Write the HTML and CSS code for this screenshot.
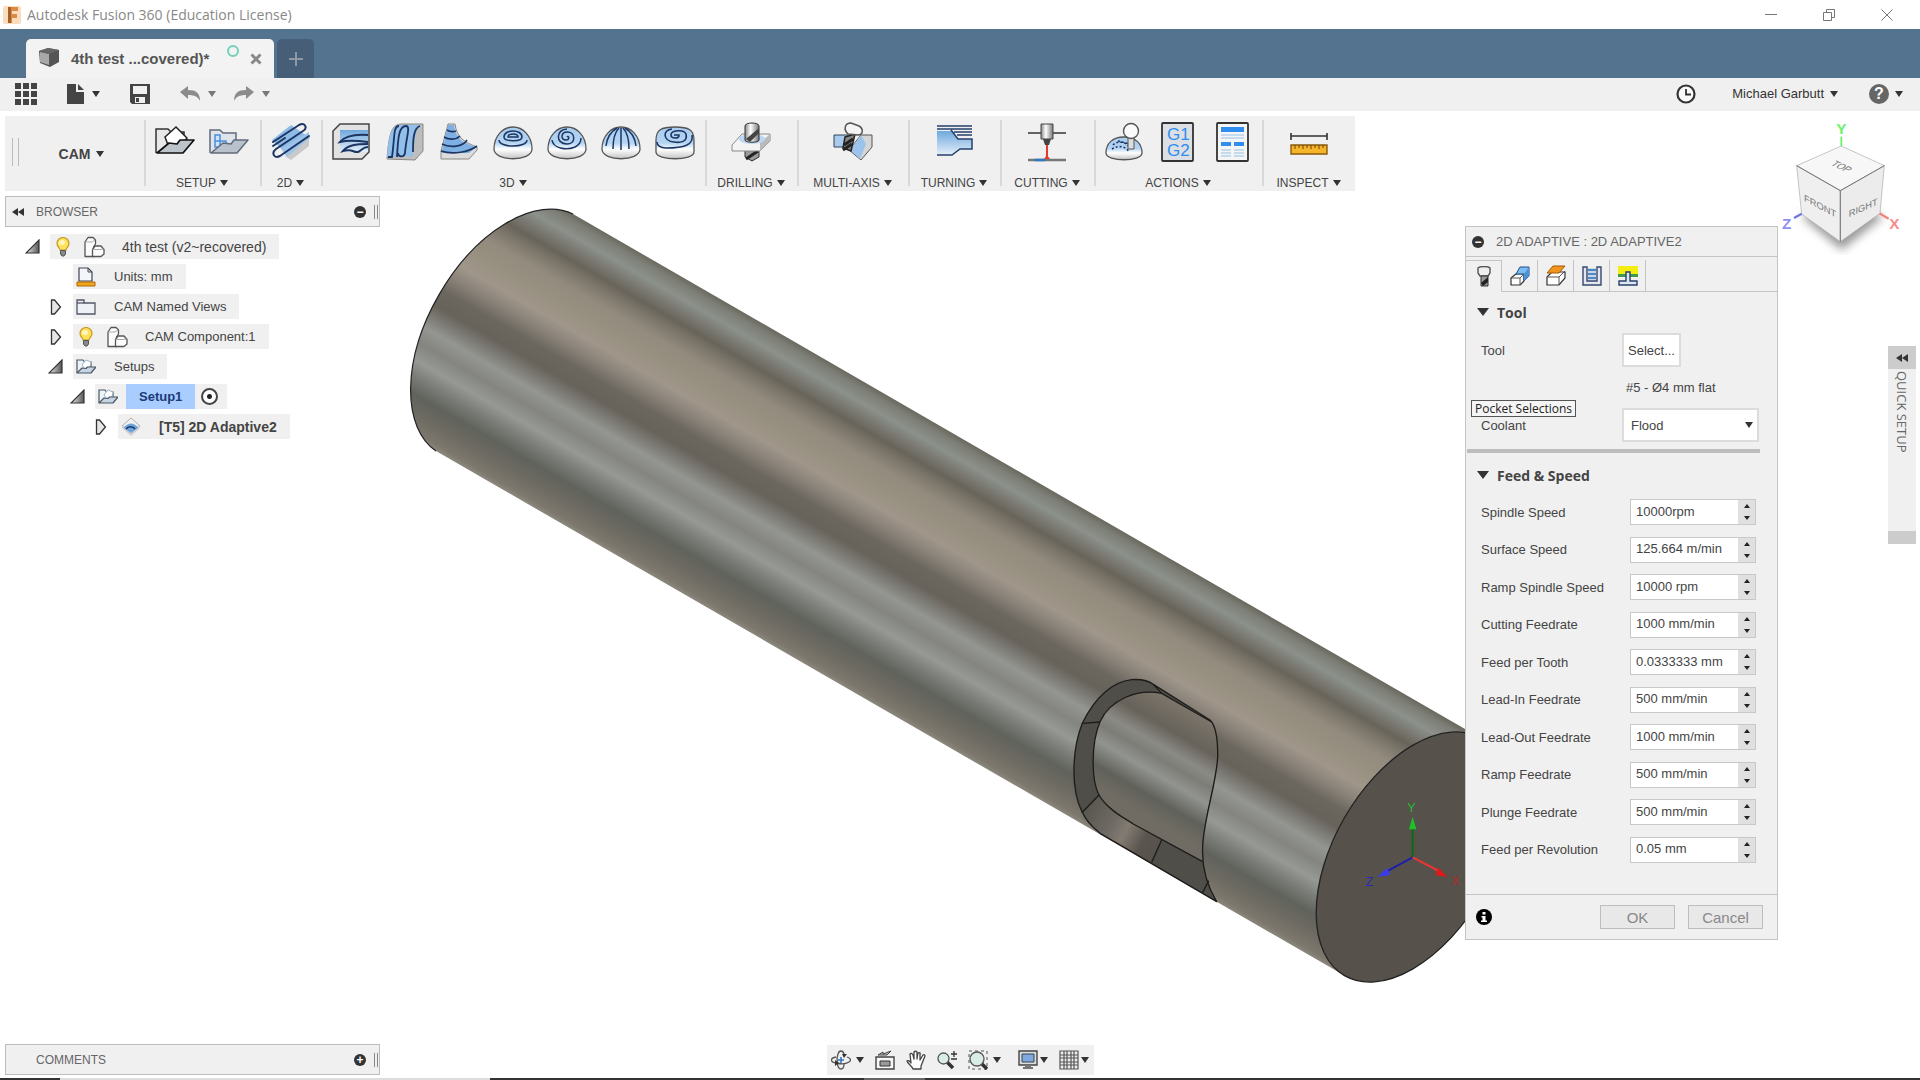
FILE: index.html
```html
<!DOCTYPE html>
<html lang="en">
<head>
  <meta charset="UTF-8" />
  <meta name="viewport" content="width=device-width, initial-scale=1.0"/>
  <title>Autodesk Fusion 360 (Education License)</title>
  <link rel="stylesheet" href="styles.css">
</head>
<body>
  <!-- shared icons -->
  <svg class="defs" aria-hidden="true">
    <linearGradient id="blue" x1="0" y1="0" x2="0" y2="1">
      <stop offset="0" stop-color="#6fa8dc"/><stop offset="1" stop-color="#e4effa"/>
    </linearGradient>
    <linearGradient id="dome" x1="0" y1="0" x2="0" y2="1">
      <stop offset="0" stop-color="#a9cdf0"/><stop offset=".5" stop-color="#b4d4f2"/><stop offset=".7" stop-color="#fff"/><stop offset="1" stop-color="#c4c4c4"/>
    </linearGradient>
    <linearGradient id="steel" x1="0" y1="0" x2="1" y2="0">
      <stop offset="0" stop-color="#888"/><stop offset=".4" stop-color="#fff"/><stop offset="1" stop-color="#777"/>
    </linearGradient>
    <linearGradient id="tri" x1="0" y1="0" x2="1" y2="0">
      <stop offset="0" stop-color="#eee"/><stop offset="1" stop-color="#555"/>
    </linearGradient>
    <symbol id="open" viewBox="0 0 16 16"><path d="M14 1v13H1z" fill="url(#tri)" stroke="#333" stroke-width="1.2"/></symbol>
    <symbol id="closed" viewBox="0 0 16 16"><path d="M3.500 1v14h3l6-7-6-7z" fill="#e6e6e6" stroke="#333" stroke-width="1.300"/></symbol>
    <symbol id="bulb" viewBox="0 0 20 20">
      <path d="M7 13c0-2-3-3-3-6.500a6 6 0 0 1 12 0C16 10 13 11 13 13z" fill="#ffe15a" stroke="#c79a2c" stroke-width="1.200"/>
      <ellipse cx="9" cy="5.500" rx="3" ry="2.500" fill="#fff6c0"/>
      <path d="M7.500 13.500h5V17l-1.500 2H9l-1.500-2z" fill="#888" stroke="#555"/>
    </symbol>
    <symbol id="component" viewBox="0 0 22 22">
      <path d="M2 20.500V6l3-4.500h5L12.500 4v4l-2 3v9.500z" fill="#fcfcfc" stroke="#555" stroke-width="1.300" stroke-linejoin="round"/>
      <path d="M9.500 20.500v-7L12 10h6l3 3.500V18l-3 2.500z" fill="#fcfcfc" stroke="#555" stroke-width="1.300" stroke-linejoin="round"/>
      <path d="M2.500 6H9l3-2M9.500 13.500h7.500l3.500-.500" fill="none" stroke="#aaa"/>
    </symbol>
    <symbol id="setup" viewBox="0 0 20 20">
      <path d="M1 16V3h6l1.500 2H15v5" fill="#eef3f8" stroke="#4a5663" stroke-width="1.200"/>
      <path d="M6 8l4-5 5 2-1 5-5 2z" fill="#fff" stroke="#9bb3cc"/>
      <path d="M1 16l5-5 4 .500 1.500-1.500H20l-5 6z" fill="#c5d3e2" stroke="#4a5663" stroke-width="1.200" stroke-linejoin="round"/>
    </symbol>
  </svg>

  <header class="titlebar">
    <svg class="app-logo" viewBox="0 0 18 18"><rect width="18" height="18" rx="2" fill="#fbdcbd"/><path d="M5 1h10v4H9v3h5v4H9v5H5z" fill="#d98a45"/><path d="M5 1h3v16H5z" fill="#a5602a"/></svg>
    <span class="app-title">Autodesk Fusion 360 (Education License)</span>
    <div class="window-buttons">
      <button aria-label="Minimize"><svg viewBox="0 0 14 14"><path d="M1 6.500h12"/></svg></button>
      <button aria-label="Restore"><svg viewBox="0 0 14 14"><path d="M1.500 4.500h8v8h-8zM4.500 4.500v-3h8v8h-3"/></svg></button>
      <button aria-label="Close"><svg viewBox="0 0 14 14"><path d="M1.500 1.500l11 11M12.500 1.500l-11 11"/></svg></button>
    </div>
  </header>

  <nav class="tabstrip">
    <div class="doc-tab">
      <svg class="doc-icon" viewBox="0 0 20 20"><path d="M0 4l9-3 11 2v12l-9 5-10-4z" fill="#555"/><path d="M1 5l9 2v11l-9-3z" fill="#a9a9a9"/><path d="M0 4l9-3 11 2-10 4z" fill="#666"/></svg>
      <span class="doc-name">4th test ...covered)*</span>
      <span class="sync"></span>
      <button class="tab-close" aria-label="Close tab"><svg viewBox="0 0 12 12"><path d="M1.500 1.500l9 9M10.500 1.500l-9 9"/></svg></button>
    </div>
    <button class="new-tab" aria-label="New tab"><svg viewBox="0 0 14 14"><path d="M7 0v14M0 7h14"/></svg></button>
  </nav>

  <div class="quickbar">
    <button class="q-grid" aria-label="Data panel"><svg viewBox="0 0 22 22"><path d="M0 0h6v6H0zM8 0h6v6H8zM16 0h6v6h-6zM0 8h6v6H0zM8 8h6v6H8zM16 8h6v6h-6zM0 16h6v6H0zM8 16h6v6H8zM16 16h6v6h-6z" fill="#444"/></svg></button>
    <button class="q-file" aria-label="File"><svg viewBox="0 0 17 20"><path d="M0 0h9v8h8v12H0z" fill="#444"/><path d="M11 0l6 6h-6z" fill="#444"/></svg><i class="caret"></i></button>
    <button class="q-save" aria-label="Save"><svg viewBox="0 0 20 20"><path d="M0 0h20v20H2l-2-2z" fill="#444"/><path d="M3 2h14v8H3z" fill="#f0f0f0"/><path d="M5 13h10v6H5z" fill="#f0f0f0"/><path d="M6 14h3v4H6z" fill="#444"/></svg></button>
    <button class="q-undo" aria-label="Undo"><svg viewBox="0 0 20 16"><path d="M0 6l8-6v4c8 0 12 3 12 11-2-4-5-6-12-6v4z" fill="#8b8b8b"/></svg><i class="caret dim"></i></button>
    <button class="q-redo" aria-label="Redo"><svg viewBox="0 0 20 16"><path d="M20 6l-8-6v4C4 4 0 7 0 15c2-4 5-6 12-6v4z" fill="#8b8b8b"/></svg><i class="caret dim"></i></button>
    <div class="account">
      <button aria-label="Job status"><svg class="clock" viewBox="0 0 20 20"><circle cx="10" cy="10" r="8.500" fill="#fafafa" stroke="#333" stroke-width="2.200"/><path d="M10 5v5.500h5" fill="none" stroke="#333" stroke-width="1.800"/></svg></button>
      <button class="user">Michael Garbutt <i class="caret"></i></button>
      <button class="help" aria-label="Help"><span>?</span><i class="caret"></i></button>
    </div>
  </div>

  <main class="workspace">
    <svg class="scene" viewBox="0 111 1920 967" role="img" aria-label="Cylinder model">
      <defs>
        <linearGradient id="metal" gradientUnits="userSpaceOnUse" x1="576.500" y1="216" x2="439.500" y2="453">
          <stop offset="0" stop-color="#6b695f"/>
          <stop offset=".025" stop-color="#7d7f77"/>
          <stop offset=".07" stop-color="#8c918b"/>
          <stop offset=".1" stop-color="#7e7f78"/>
          <stop offset=".15" stop-color="#69645a"/>
          <stop offset=".19" stop-color="#7e786c"/>
          <stop offset=".24" stop-color="#938b7e"/>
          <stop offset=".3" stop-color="#979080"/>
          <stop offset=".37" stop-color="#a0968a"/>
          <stop offset=".42" stop-color="#8b847b"/>
          <stop offset=".48" stop-color="#6b665e"/>
          <stop offset=".54" stop-color="#67625a"/>
          <stop offset=".59" stop-color="#7f7e79"/>
          <stop offset=".63" stop-color="#949691"/>
          <stop offset=".69" stop-color="#848580"/>
          <stop offset=".75" stop-color="#969994"/>
          <stop offset=".8" stop-color="#7c7f79"/>
          <stop offset=".86" stop-color="#60625c"/>
          <stop offset=".92" stop-color="#6d6a62"/>
          <stop offset=".98" stop-color="#7d786d"/>
          <stop offset="1" stop-color="#8d887e"/>
        </linearGradient>
        <linearGradient id="floor" gradientUnits="userSpaceOnUse" x1="470" y1="140" x2="280" y2="470">
          <stop offset="0" stop-color="#857f74"/>
          <stop offset=".15" stop-color="#777167"/>
          <stop offset=".32" stop-color="#67625a"/>
          <stop offset=".47" stop-color="#8b8b86"/>
          <stop offset=".56" stop-color="#7d7d78"/>
          <stop offset=".68" stop-color="#92948f"/>
          <stop offset=".85" stop-color="#60615b"/>
          <stop offset="1" stop-color="#706c63"/>
        </linearGradient>
        <linearGradient id="wall" gradientUnits="userSpaceOnUse" x1="200" y1="510" x2="410" y2="630">
          <stop offset="0" stop-color="#5a5751"/>
          <stop offset=".35" stop-color="#6e6a63"/>
          <stop offset=".55" stop-color="#827b72"/>
          <stop offset=".8" stop-color="#5a554e"/>
          <stop offset="1" stop-color="#57534c"/>
        </linearGradient>
      </defs>
      <path d="M573 214L1481.500 738.500L1344.500 975.500L436 451A137 79 -60 0 1 573 214z" fill="url(#metal)"/>
      <path d="M436 451A137 79 -60 0 1 573 214" fill="none" stroke="#222" stroke-width="1.200"/>
      <ellipse cx="1413" cy="857" rx="137" ry="79" transform="rotate(-60 1413 857)" fill="#56514a" stroke="#222" stroke-width="1.300"/>

      <!-- pocket and origin triad, drawn at three times size -->
      <g transform="translate(1020 640) scale(.33333)" stroke-linejoin="round">
        <path d="M570 240L400 133C380 118 350 118 335 119C280 125 225 170 187 250C155 330 152 450 187 517C200 548 225 568 240 580L590 785C560 735 545 680 548 620C550 540 590 430 593 350C594 280 582 252 570 240z" fill="#504e49"/>
        <path d="M425 160C350 145 270 180 240 245C213 310 213 420 237 465C262 510 320 538 340 552L548 665C540 560 588 430 593 350C594 280 582 252 570 240z" fill="url(#floor)"/>
        <path d="M237 465L187 517C200 548 225 568 240 580L395 667L425 600L340 552C320 538 262 510 237 465z" fill="url(#wall)"/>
        <g fill="none" stroke="#1d1c1a" stroke-width="4">
          <path d="M570 240L400 133C380 118 350 118 335 119C280 125 225 170 187 250C155 330 152 450 187 517C200 548 225 568 240 580L590 785C560 735 545 680 548 620C550 540 590 430 593 350C594 280 582 252 570 240z"/>
          <path d="M425 160C350 145 270 180 240 245C213 310 213 420 237 465C262 510 320 538 340 552L548 665"/>
          <path d="M187 250L240 246M187 517L237 465M425 600L395 667M566 722L548 758M400 133L425 160L575 246"/>
        </g>
        <g stroke-width="6">
          <path d="M1178 652V560" stroke="#0b6b14"/><path d="M1178 530l11 38h-22z" fill="#18c428"/>
          <path d="M1178 652L1095 697" stroke="#1e1eae"/><path d="M1072 711l30-27 8 20z" fill="#3a3af2"/>
          <path d="M1178 652L1262 696" stroke="#e33"/><path d="M1282 711l-36-6 10-22z" fill="#e01818"/>
        </g>
        <g class="axis-text">
          <text x="1162" y="517" fill="#1fbf2f">Y</text>
          <text x="1037" y="738" fill="#2a2ab8">Z</text>
          <text x="1294" y="736" fill="#b02c24">X</text>
        </g>
      </g>
    </svg>

    <svg class="viewcube" viewBox="240 345 369 420" role="img" aria-label="View cube">
      <defs><filter id="soft"><feGaussianBlur stdDeviation="14"/></filter></defs>
      <path d="M305 650L425 590L550 650L425 750z" fill="#999" filter="url(#soft)"/>
      <path d="M424 440v-30" stroke="#5df25d" stroke-width="5"/>
      <path d="M308 640l-26 14" stroke="#7474e8" stroke-width="7"/>
      <path d="M538 640l28 16" stroke="#f58080" stroke-width="7"/>
      <path d="M424 438L553 497L421 572L290 497z" fill="#f7f7f7" stroke="#aaa" stroke-width="2"/>
      <path d="M290 497L421 572V725L305 642z" fill="#efefef" stroke="#aaa" stroke-width="2"/>
      <path d="M421 572L553 497L540 640L421 725z" fill="#ececec" stroke="#aaa" stroke-width="2"/>
      <path d="M290 497L421 572L553 497M421 572V725" fill="none" stroke="#777" stroke-width="3"/>
      <g class="cube-text">
        <text transform="translate(312 602) skewY(28)">FRONT</text>
        <text transform="translate(446 652) skewY(-24)">RIGHT</text>
        <text transform="translate(390 494) rotate(25) skewX(-30)">TOP</text>
      </g>
      <g class="cube-axis">
        <text x="409" y="402" fill="#6df26d">Y</text>
        <text x="246" y="687" fill="#8f8ff5">Z</text>
        <text x="568" y="686" fill="#f78c8c">X</text>
      </g>
    </svg>

    <div class="ribbon">
      <span class="grip"></span>
      <button class="mode">CAM <i class="caret"></i></button>

      <section class="group">
        <div class="icons">
          <button aria-label="New setup"><svg viewBox="0 0 40 40"><path d="M1 31V7h12l3 3h13v10" fill="#e8e8e8" stroke="#333" stroke-width="1.500"/><path d="M10 15L21 5l11 11-6 8-13-1z" fill="#fff" stroke="#222" stroke-width="1.500"/><path d="M2 31l12-10 8 1 3-4h14L28 31z" fill="#bcc3c9" stroke="#111" stroke-width="1.700" stroke-linejoin="round"/></svg></button>
          <button aria-label="Folder"><svg viewBox="0 0 40 40"><path d="M1 31V8h10l3 3h13v10" fill="#dfe3ea" stroke="#606b7c" stroke-width="1.500"/><path d="M6 13h5v6H6zM6 19h5v6H6zM11 19h6v6h-6z" fill="#cfe3fa" stroke="#4b8edb" stroke-width="1.500"/><path d="M2 31l12-10 8 1 3-4h14L28 31z" fill="#b9c1cc" stroke="#606b7c" stroke-width="1.500" stroke-linejoin="round"/></svg></button>
        </div>
        <button class="menu">SETUP <i class="caret"></i></button>
      </section>

      <section class="group">
        <div class="icons">
          <button aria-label="2D adaptive"><svg viewBox="0 0 40 40"><path d="M1 18L20 3l19 13-20 19z" fill="#8ebae6"/><path d="M14 34L38 16v8L20 38z" fill="#c9c9c9"/><path d="M10 27L38 10v6L16 35z" fill="#9cc3ea"/><g fill="none" stroke="#1c3563" stroke-width="2" stroke-linecap="round"><path d="M2 20L28 3c6-3 9 3 4 6L5 27c-5 4-2 10 4 7L38 14"/><path d="M2 24L14 16"/></g></svg></button>
        </div>
        <button class="menu">2D <i class="caret"></i></button>
      </section>

      <section class="group">
        <div class="icons">
          <button aria-label="Adaptive clearing"><svg viewBox="0 0 40 40"><path d="M2 37V9l7-7h29v28l-7 7z" fill="#e2e2e2" stroke="#444" stroke-width="1.500"/><path d="M9 8h28v22H9z" fill="url(#blue)"/><path d="M37 13c-13-1-23 1-28 7 8-2 20-1 28 0M37 22c-12 0-20 1-25 7 10-3 10 2 15 1 4-2 5-5 10-5" fill="none" stroke="#1c3563" stroke-width="2"/></svg></button>
          <button aria-label="Parallel"><svg viewBox="0 0 40 40"><path d="M2 37C4 10 7 2 17 2h21v27l-8 9z" fill="#bdbdbd" stroke="#888"/><path d="M2 35C4 10 7 3 17 3h19c-6 3-7 20-8 31z" fill="#93bfeb"/><path d="M3 35h4C10 15 8 4 14 4M12 35C13 15 14 4 21 4c5 0 0 12-1 27-1 5-7 4-7 0M28 30c0-10 0-24 7-26" fill="none" stroke="#1c3563" stroke-width="1.800"/></svg></button>
          <button aria-label="Contour"><svg viewBox="0 0 40 40"><path d="M2 37V29L9 2h7c2 14 9 18 22 23v3l-8 9z" fill="#dcdcdc" stroke="#888"/><path d="M3 29L9 3h6c2 14 9 18 22 22l-7 6H3z" fill="#7fb0e4"/><path d="M8 8c3 2 6 2 9 1M5 15c5 3 12 3 16-1M3 22c8 4 21 3 25-4M2 29c12 4 28 1 36-5" fill="none" stroke="#1c3563" stroke-width="1.600"/></svg></button>
          <button aria-label="Pocket clearing"><svg viewBox="0 0 40 40"><path d="M1 27C1 14 10 5 20 5s19 9 19 22c0 13-38 13-38 0z" fill="url(#dome)" stroke="#555" stroke-width="1.300"/><g fill="none" stroke="#1c3563" stroke-width="1.500"><path d="M15 15c0-4 10-4 10 0zM11 15c0-8 18-8 18 0 0 5-18 5-18 0zM6 18c0 8 28 8 28 0"/></g></svg></button>
          <button aria-label="Spiral"><svg viewBox="0 0 40 40"><path d="M1 27C1 14 10 5 20 5s19 9 19 22c0 13-38 13-38 0z" fill="url(#dome)" stroke="#555" stroke-width="1.300"/><path d="M20 15c2-2 3 3-1 3-6 0-5-8 1-8 9 0 9 12 0 12C8 22 9 7 20 7M5 18c1 8 14 11 23 7 4-2 6-5 6-9" fill="none" stroke="#1c3563" stroke-width="1.500"/></svg></button>
          <button aria-label="Radial"><svg viewBox="0 0 40 40"><path d="M1 27C1 14 10 5 20 5s19 9 19 22c0 13-38 13-38 0z" fill="url(#dome)" stroke="#555" stroke-width="1.300"/><path d="M20 6v22M18 6c-4 4-6 12-6 21M22 6c4 4 6 12 6 21M16 6C9 10 6 16 5 24M24 6c7 4 10 10 11 18" fill="none" stroke="#1c3563" stroke-width="1.500"/></svg></button>
          <button aria-label="Morphed spiral"><svg viewBox="0 0 40 40"><path d="M1 30V18C1 8 6 5 20 5s19 3 19 13v12c0 9-38 9-38 0z" fill="url(#dome)" stroke="#555" stroke-width="1.300"/><path d="M19 13h5c1 4-8 4-8 0 0-5 13-6 15-1 2 8-6 9-12 8C8 19 7 8 17 7M37 13c2 10-8 13-26 13-6 0-9-3-9-6" fill="none" stroke="#1c3563" stroke-width="1.600"/></svg></button>
        </div>
        <button class="menu">3D <i class="caret"></i></button>
      </section>

      <section class="group">
        <div class="icons">
          <button aria-label="Drill"><svg viewBox="0 0 40 40"><path d="M14 28v7l7 4 7-4v-8z" fill="#999" stroke="#333"/><path d="M15 37l12-8" stroke="#222" stroke-width="3"/><path d="M1 23l10-11h28v7L29 29H1z" fill="#f3f3f3" stroke="#888"/><path d="M29 21l10-9v7L29 29z" fill="#bbb"/><ellipse cx="21" cy="17" rx="13" ry="5" fill="#bad7f3"/><path d="M14 4c0-4 14-4 14 0v14c0 3-14 3-14 0z" fill="url(#steel)" stroke="#333"/><path d="M15 17L28 6v5l-9 9z" fill="#444"/></svg></button>
        </div>
        <button class="menu">DRILLING <i class="caret"></i></button>
      </section>

      <section class="group">
        <div class="icons">
          <button aria-label="Multi-axis"><svg viewBox="0 0 40 40"><path d="M1 13h14v12H1z" fill="#a9cbed" stroke="#345"/><path d="M16 28L28 13h11v12L28 38z" fill="#d5d5d5" stroke="#555"/><path d="M17 28L28 13l5 9-6 15z" fill="#9bc3ec"/><path d="M12 15l10-3-4 17-8-3z" fill="#888" stroke="#222" stroke-width="1.500"/><path d="M11 23l9-6M10 28l9-6" stroke="#222" stroke-width="3"/><path d="M15 12c-5-5-3-11 3-11l8 3c5 3 4 9-1 9z" fill="#f4f4f4" stroke="#555" stroke-width="1.500"/></svg></button>
        </div>
        <button class="menu">MULTI-AXIS <i class="caret"></i></button>
      </section>

      <section class="group">
        <div class="icons">
          <button aria-label="Turning"><svg viewBox="0 0 40 40"><path d="M3 9h15l6 8h14v10H26l-8 6H3z" fill="url(#blue)"/><path d="M3 4h35M3 7h35M20 10h18M23 13h15M3 33h15l8-6h12V17H24L17 8" fill="none" stroke="#25406c" stroke-width="1.500"/></svg></button>
        </div>
        <button class="menu">TURNING <i class="caret"></i></button>
      </section>

      <section class="group">
        <div class="icons">
          <button aria-label="Cutting"><svg viewBox="0 0 40 40"><path d="M1 11h38" stroke="#333" stroke-width="1.600"/><path d="M14 2h12v15H14z" fill="url(#steel)" stroke="#444"/><path d="M16 17h8l-2 6h-4z" fill="#444"/><path d="M20 23v14" stroke="#e23a2c" stroke-width="2"/><path d="M1 38h38" stroke="#777" stroke-width="2.500"/><path d="M8 38h10" stroke="#2e78c8" stroke-width="2.500"/><path d="M17 37l3-4 3 4z" fill="#e23a2c"/></svg></button>
        </div>
        <button class="menu">CUTTING <i class="caret"></i></button>
      </section>

      <section class="group">
        <div class="icons">
          <button aria-label="Simulate"><svg viewBox="0 0 40 40"><path d="M2 31c0-9 6-16 18-16s18 7 18 16c0 9-36 9-36 0z" fill="url(#dome)" stroke="#555" stroke-width="1.300"/><path d="M9 23c4-4 12-4 15 1M8 27c6-4 14-3 17 3M14 19l12 3" fill="none" stroke="#1c3563" stroke-width="1.600" stroke-dasharray="2 2"/><path d="M24 14h6v13h-6z" fill="#ddd" stroke="#555"/><circle cx="27" cy="9" r="7.500" fill="#fafafa" stroke="#555" stroke-width="1.400"/></svg></button>
          <button aria-label="Post process"><svg viewBox="0 0 40 40"><rect x="4" y="1" width="31" height="38" rx="1" fill="#dcdfe3" stroke="#333" stroke-width="1.800"/><text class="gcode" x="9" y="18">G1</text><text class="gcode" x="9" y="34">G2</text></svg></button>
          <button aria-label="Setup sheet"><svg viewBox="0 0 40 40"><rect x="5" y="1" width="31" height="38" rx="1" fill="#f5f5f5" stroke="#333" stroke-width="1.800"/><path d="M9 5h23v5H9zM9 20h10v4H9zM22 20h10v4H22z" fill="#2f8df0"/><path d="M9 13h23M9 16h23M9 28h10M22 28h10M9 31h10M22 31h10M9 34h10M22 34h10" stroke="#8fc1e8" stroke-width="1.200"/></svg></button>
        </div>
        <button class="menu">ACTIONS <i class="caret"></i></button>
      </section>

      <section class="group">
        <div class="icons">
          <button aria-label="Measure"><svg viewBox="0 0 40 40"><path d="M2 14h36M2 11v7M38 11v7" stroke="#333" stroke-width="1.600"/><path d="M2 23h36v9H2z" fill="#f5b52a" stroke="#8a5a0c" stroke-width="1.400"/><path d="M6 23v4M10 23v3M14 23v4M18 23v3M22 23v4M26 23v3M30 23v4M34 23v3" stroke="#6b4408"/></svg></button>
        </div>
        <button class="menu">INSPECT <i class="caret"></i></button>
      </section>
    </div>

    <div class="stage">
      <aside class="browser">
        <div class="panel-bar">
          <svg class="rewind" viewBox="0 0 12 8"><path d="M6 0v8L0 4zM12 0v8L6 4z" fill="#333"/></svg>
          <span>BROWSER</span>
          <button class="round" aria-label="Collapse browser">&minus;</button>
          <i class="bar-grip"></i>
        </div>
        <ul class="tree">
          <li class="level-1"><svg class="toggle"><use href="#open"/></svg><div class="node root"><svg class="ico"><use href="#bulb"/></svg><svg class="ico comp"><use href="#component"/></svg><span class="far">4th test (v2~recovered)</span></div></li>
          <li class="level-2"><span class="toggle"></span><div class="node"><svg class="ico" viewBox="0 0 20 20"><path d="M3 14V1h9l4 4v9z" fill="#f3f6fa" stroke="#445" stroke-width="1.200"/><path d="M12 1v4h4" fill="none" stroke="#445"/><path d="M1 15h18v4H1z" fill="#f2a71b" stroke="#a86a08"/></svg><span>Units: mm</span></div></li>
          <li class="level-2"><svg class="toggle"><use href="#closed"/></svg><div class="node"><svg class="ico" viewBox="0 0 20 20"><path d="M1 17V3h7v3h11v11z" fill="#eef1f6" stroke="#556" stroke-width="1.300"/><path d="M1 6h7" stroke="#556" stroke-width="1.300"/></svg><span>CAM Named Views</span></div></li>
          <li class="level-2"><svg class="toggle"><use href="#closed"/></svg><div class="node"><svg class="ico"><use href="#bulb"/></svg><svg class="ico comp"><use href="#component"/></svg><span class="far">CAM Component:1</span></div></li>
          <li class="level-2"><svg class="toggle"><use href="#open"/></svg><div class="node"><svg class="ico"><use href="#setup"/></svg><span>Setups</span></div></li>
          <li class="level-3"><svg class="toggle"><use href="#open"/></svg><div class="node active"><svg class="ico"><use href="#setup"/></svg><span>Setup1</span><input type="radio" name="setup" aria-label="Activate Setup1" checked></div></li>
          <li class="level-4"><svg class="toggle"><use href="#closed"/></svg><div class="node bold"><svg class="ico" viewBox="0 0 20 20"><path d="M10 1l9 8-9 8-9-8z" fill="#f2f2f2" stroke="#aaa"/><path d="M1 11l9 8 9-8v-2H1z" fill="#cfcfcf"/><path d="M3 11c3-6 11-6 14 0l-7 5z" fill="#6ea4de"/><path d="M5 12c2-3 7-3 9 0" fill="none" stroke="#1c3563" stroke-width="1.500"/></svg><span>[T5] 2D Adaptive2</span></div></li>
        </ul>
      </aside>

      <form class="dialog">
        <div class="dialog-title"><button type="button" class="round" aria-label="Collapse dialog">&minus;</button><span>2D ADAPTIVE : 2D ADAPTIVE2</span></div>
        <div class="dialog-tabs">
          <button type="button" class="current" aria-label="Tool"><svg viewBox="0 0 20 22"><path d="M4 2c2-2 10-2 12 0v5l-2 3H6L4 7z" fill="#eee" stroke="#555" stroke-width="1.400"/><path d="M7 10h7v10H7z" fill="#999" stroke="#333"/><path d="M7 17l7-6v5l-5 4z" fill="#222"/></svg></button>
          <button type="button" aria-label="Geometry"><svg viewBox="0 0 20 22"><path d="M1 13l5-4h8v7l-4 4H1z" fill="#fff" stroke="#333" stroke-width="1.200" stroke-linejoin="round"/><path d="M6 9l4-7h9v9l-5 5V9z" fill="#7cbcf0" stroke="#1d4f86" stroke-linejoin="round"/><path d="M14 9l5-7v9l-5 5z" fill="#4b93d6"/><path d="M1 13h9v7M10 13l4-4" fill="none" stroke="#555"/></svg></button>
          <button type="button" aria-label="Heights"><svg viewBox="0 0 20 22"><path d="M1 12l5-5h13v6l-6 7H1z" fill="#fff" stroke="#333" stroke-width="1.200"/><path d="M1 12h12v8M13 12l6-6" fill="none" stroke="#555"/><path d="M1 8l6-7h12l-6 7z" fill="#f0951e" stroke="#a55b08"/></svg></button>
          <button type="button" aria-label="Passes"><svg viewBox="0 0 20 22"><path d="M1 2h4v14h10V2h4v18H1z" fill="#e3e6ee" stroke="#34486c" stroke-width="1.400"/><path d="M6 5h8M6 9h8M6 13h8" stroke="#4f88c4" stroke-width="2.500"/></svg></button>
          <button type="button" aria-label="Linking"><svg viewBox="0 0 20 22"><path d="M0 1h20v8H0z" fill="#f4ee10"/><path d="M0 9h20v3H0z" fill="#3f9b4b"/><path d="M8 7h4v9h7v4H1v-4h7z" fill="#dfe7f2" stroke="#27406b" stroke-width="1.400"/></svg></button>
        </div>

        <div class="dialog-body">
          <h2>Tool</h2>
          <div class="row tall"><label for="tool">Tool</label><button type="button" id="tool" class="select-tool">Select...</button></div>
          <div class="row info"><span></span><output>#5 - Ø4 mm flat</output></div>
          <div class="row tall"><label for="coolant">Coolant</label>
            <div class="dropdown"><select id="coolant"><option>Flood</option><option>Mist</option><option>Disabled</option></select><i class="caret"></i></div>
            <span class="tooltip">Pocket Selections</span>
          </div>
          <hr>
          <h2>Feed &amp; Speed</h2>
          <div class="fields">
            <div class="field"><label for="f1">Spindle Speed</label><div class="spin"><input id="f1" type="text" value="10000rpm"><div><button type="button" aria-label="Increase"></button><button type="button" aria-label="Decrease"></button></div></div></div>
            <div class="field"><label for="f2">Surface Speed</label><div class="spin"><input id="f2" type="text" value="125.664 m/min"><div><button type="button" aria-label="Increase"></button><button type="button" aria-label="Decrease"></button></div></div></div>
            <div class="field"><label for="f3">Ramp Spindle Speed</label><div class="spin"><input id="f3" type="text" value="10000 rpm"><div><button type="button" aria-label="Increase"></button><button type="button" aria-label="Decrease"></button></div></div></div>
            <div class="field"><label for="f4">Cutting Feedrate</label><div class="spin"><input id="f4" type="text" value="1000 mm/min"><div><button type="button" aria-label="Increase"></button><button type="button" aria-label="Decrease"></button></div></div></div>
            <div class="field"><label for="f5">Feed per Tooth</label><div class="spin"><input id="f5" type="text" value="0.0333333 mm"><div><button type="button" aria-label="Increase"></button><button type="button" aria-label="Decrease"></button></div></div></div>
            <div class="field"><label for="f6">Lead-In Feedrate</label><div class="spin"><input id="f6" type="text" value="500 mm/min"><div><button type="button" aria-label="Increase"></button><button type="button" aria-label="Decrease"></button></div></div></div>
            <div class="field"><label for="f7">Lead-Out Feedrate</label><div class="spin"><input id="f7" type="text" value="1000 mm/min"><div><button type="button" aria-label="Increase"></button><button type="button" aria-label="Decrease"></button></div></div></div>
            <div class="field"><label for="f8">Ramp Feedrate</label><div class="spin"><input id="f8" type="text" value="500 mm/min"><div><button type="button" aria-label="Increase"></button><button type="button" aria-label="Decrease"></button></div></div></div>
            <div class="field"><label for="f9">Plunge Feedrate</label><div class="spin"><input id="f9" type="text" value="500 mm/min"><div><button type="button" aria-label="Increase"></button><button type="button" aria-label="Decrease"></button></div></div></div>
            <div class="field"><label for="f10">Feed per Revolution</label><div class="spin"><input id="f10" type="text" value="0.05 mm"><div><button type="button" aria-label="Increase"></button><button type="button" aria-label="Decrease"></button></div></div></div>
          </div>
        </div>

        <div class="dialog-footer">
          <svg class="info-icon" viewBox="0 0 16 16"><circle cx="8" cy="8" r="8"/><path d="M6.500 3h3v2.500h-3zM5.500 7h4v4.500h1.500V13h-6v-1.500h1.500v-3H5.500z" fill="#fff"/></svg>
          <button type="submit">OK</button>
          <button type="button">Cancel</button>
        </div>
      </form>

      <button class="quick-setup"><span class="qs-head"><svg viewBox="0 0 12 8"><path d="M6 0v8L0 4zM12 0v8L6 4z" fill="#333"/></svg></span><span class="qs-text">QUICK SETUP</span><span class="qs-foot"></span></button>
    </div>

    <div class="bottom">
      <div class="panel-bar">
        <span class="comments">COMMENTS</span>
        <button class="round" aria-label="Expand comments">+</button>
        <i class="bar-grip"></i>
      </div>
      <div class="navbar">
        <button aria-label="Orbit"><svg viewBox="0 0 20 20"><g fill="none" stroke="#555" stroke-width="1.300"><path d="M13 4C12 0 8 0 7 4c-2 5-1 15 3 15 2 0 3-2 3-5"/><path d="M5 7c-6 1-6 5 0 6 4 1 10 1 13-1 3-2 1-4-2-5"/></g><path d="M7 10h6M10 7v6" stroke="#2b74c4" stroke-width="1.500"/><path d="M11 4h5l-3 4zM4 10v6l4-3z" fill="#333"/></svg><i class="caret"></i></button>
        <button aria-label="Look at"><svg viewBox="0 0 20 20"><path d="M1 7h18v12H1z" fill="#f6f6f6" stroke="#444" stroke-width="1.400"/><path d="M5 11h10v5H5z" fill="#9a9a9a" stroke="#333"/><path d="M3 5l5-3v2l8-3-4 4z" fill="#bbb" stroke="#444"/></svg></button>
        <button aria-label="Pan"><svg viewBox="0 0 20 20"><path d="M7 19c-1-3-5-5-6-8 1-1 3 0 4 2L4 4c1-1 2-1 3 1l1 4V2c1-1 2-1 3 0v7l1-6c1-1 3 0 2 1l0 6 3-5c1-1 2 0 2 1l-4 10v3z" fill="#fff" stroke="#444" stroke-width="1.300" stroke-linejoin="round"/></svg></button>
        <button aria-label="Zoom"><svg viewBox="0 0 20 20"><path d="M10 12l6 6" stroke="#333" stroke-width="3.500"/><circle cx="6.500" cy="8.500" r="5.500" fill="#d9ede8" stroke="#555" stroke-width="1.300"/><path d="M14 4h6M17 1v6M14 9h6" stroke="#333" stroke-width="1.300"/></svg></button>
        <button aria-label="Fit"><svg viewBox="0 0 20 20"><path d="M1 1h18v18H1z" fill="none" stroke="#555" stroke-dasharray="3 3"/><path d="M13 13l6 6" stroke="#333" stroke-width="3.500"/><circle cx="9" cy="9" r="7" fill="#d9ede8" stroke="#555" stroke-width="1.300"/></svg><i class="caret"></i></button>
        <button class="display" aria-label="Display settings"><svg viewBox="0 0 20 20"><path d="M1 1h18v14H1z" fill="#ddd" stroke="#444" stroke-width="1.400"/><path d="M4 4h12v8H4z" fill="#7fa8dc" stroke="#345"/><path d="M7 15h6v2h2v2H5v-2h2z" fill="#777"/></svg><i class="caret"></i></button>
        <button class="grid" aria-label="Grid"><svg viewBox="0 0 20 20"><path d="M1 1h18v18H1z" fill="#ececec"/><path d="M1 1h18v18H1zM5 1v18M8 1v18M12 1v18M15 1v18M1 5h18M1 8h18M1 12h18M1 15h18" fill="none" stroke="#555" stroke-width="1.200"/></svg><i class="caret"></i></button>
      </div>
    </div>
  </main>
  <div class="taskbar-edge"></div>
</body>
</html>
```

FILE: styles.css
```css
* {
  box-sizing: border-box;
  margin: 0;
  padding: 0;
}

body {
  display: flex;
  flex-direction: column;
  min-height: 100vh;
  background: #fff;
  color: #444;
  font-family: "Liberation Sans", Arial, sans-serif;
  font-size: 13px;
}

button {
  background: none;
  border: none;
  color: inherit;
  font: inherit;
  display: flex;
  align-items: center;
}

.defs {
  position: absolute;
  width: 0;
  height: 0;
}

.caret {
  border: 4px solid transparent;
  border-top: 6px solid #333;
  border-bottom: 0;
  margin-left: 6px;
}

.caret.dim {
  border-top-color: #777;
}

/* window title */
.titlebar {
  display: flex;
  align-items: center;
  height: 29px;
  padding: 0 26px 0 3px;
}

.app-logo {
  width: 18px;
  height: 18px;
}

.app-title {
  margin-left: 6px;
  font-family: "Open Sans", sans-serif;
  font-size: 14px;
  color: #888;
}

.window-buttons {
  display: flex;
  gap: 44px;
  margin-left: auto;
}

.window-buttons svg {
  width: 14px;
  height: 14px;
  fill: none;
  stroke: #777;
}

/* document tabs */
.tabstrip {
  display: flex;
  align-items: flex-end;
  gap: 3px;
  height: 49px;
  padding-left: 26px;
  background: #54738f;
}

.doc-tab {
  display: flex;
  align-items: center;
  width: 248px;
  height: 39px;
  padding: 0 12px 0 13px;
  background: #f3f3f3;
  border-radius: 5px 5px 0 0;
}

.doc-icon {
  width: 20px;
  height: 20px;
  margin-bottom: 4px;
}

.doc-name {
  margin-left: 12px;
  font-size: 15px;
  font-weight: bold;
  color: #555;
}

.sync {
  width: 12px;
  height: 12px;
  margin: 0 0 16px auto;
  border: 2px solid #74d0b8;
  border-radius: 50%;
}

.tab-close {
  margin-left: 11px;
}

.tab-close svg {
  width: 12px;
  height: 12px;
  stroke: #888;
  stroke-width: 3;
}

.new-tab {
  justify-content: center;
  width: 37px;
  height: 39px;
  background: #465e78;
  border-radius: 5px 5px 0 0;
}

.new-tab svg {
  width: 14px;
  height: 14px;
  stroke: #8e99a5;
  stroke-width: 2;
}

/* quick access bar */
.quickbar {
  display: flex;
  align-items: center;
  height: 33px;
  padding: 0 17px 2px 15px;
  background: #f0f0f0;
}

.q-grid svg {
  width: 22px;
  height: 22px;
}

.q-file {
  margin-left: 30px;
}

.q-file svg {
  width: 17px;
  height: 20px;
}

.q-save {
  margin-left: 30px;
}

.q-save svg {
  width: 20px;
  height: 20px;
}

.q-undo {
  margin-left: 30px;
}

.q-redo {
  margin-left: 18px;
}

.q-undo svg,
.q-redo svg {
  width: 20px;
  height: 16px;
}

.q-undo .caret,
.q-redo .caret,
.q-file .caret {
  margin-left: 8px;
}

.account {
  display: flex;
  align-items: center;
  margin-left: auto;
}

.clock {
  width: 20px;
  height: 20px;
}

.user {
  margin-left: 36px;
  color: #333;
}

.help {
  margin-left: 31px;
}

.help span {
  width: 20px;
  height: 20px;
  background: #666;
  border-radius: 50%;
  color: #fff;
  font-size: 16px;
  font-weight: bold;
  line-height: 20px;
  text-align: center;
}

/* modelling area */
.workspace {
  position: relative;
  display: flex;
  flex-direction: column;
  flex: 1;
}

.scene {
  position: absolute;
  inset: 0;
  width: 100%;
  height: 100%;
}

.axis-text {
  font-size: 38px;
}

.viewcube {
  position: absolute;
  top: 4px;
  right: 17px;
  width: 123px;
  height: 140px;
}

.cube-text {
  font-size: 28px;
  fill: #777;
}

.cube-axis {
  font-size: 46px;
  font-weight: bold;
}

/* ribbon */
.ribbon {
  position: relative;
  display: grid;
  grid-template-columns: 14px 125px 116px 61px 384px 92px 111px 92px 94px 168px 93px;
  align-self: flex-start;
  height: 75px;
  margin: 5px 0 5px 5px;
  background: #f0f0f0;
}

.grip {
  width: 7px;
  height: 28px;
  margin: 22px 0 0 7px;
  border: 1px solid #bbb;
  border-width: 0 1px;
}

.mode {
  justify-content: center;
  font-size: 14px;
  font-weight: bold;
}

.group {
  display: flex;
  flex-direction: column;
  align-items: center;
  justify-content: space-between;
  padding-top: 6px;
  background: linear-gradient(#d8d8d8, #d8d8d8) 0 4px / 2px 66px no-repeat;
}

.icons {
  display: flex;
  gap: 14px;
}

.icons svg {
  width: 40px;
  height: 40px;
}

.gcode {
  font-size: 17px;
  fill: #2f8df0;
}

.menu {
  height: 16px;
  font-size: 12px;
}

.menu .caret {
  margin-left: 4px;
}

/* browser tree */
.stage {
  position: relative;
  display: flex;
  align-items: flex-start;
  padding: 0 4px 0 5px;
}

.browser,
.bottom .panel-bar {
  width: 375px;
}

.panel-bar {
  display: flex;
  align-items: center;
  height: 31px;
  padding: 0 1px 0 6px;
  background: #f0f0f0;
  border: 1px solid #bdbdbd;
  color: #666;
  font-size: 12px;
}

.rewind {
  width: 12px;
  height: 8px;
  margin-right: 12px;
}

.comments {
  margin-left: 24px;
}

.round {
  justify-content: center;
  width: 12px;
  height: 12px;
  background: #333;
  border-radius: 50%;
  color: #fff;
  font-size: 12px;
  font-weight: bold;
  line-height: 12px;
}

.panel-bar .round {
  margin-left: auto;
}

.bar-grip {
  width: 4px;
  height: 14px;
  margin-left: 8px;
  border: 1px solid #888;
  border-width: 0 1px;
}

.tree {
  display: flex;
  flex-direction: column;
  gap: 5px;
  padding-top: 7px;
  list-style: none;
}

.tree li {
  display: flex;
  align-items: center;
}

.level-1 {
  padding-left: 20px;
}

.level-2 {
  padding-left: 43px;
}

.level-3 {
  padding-left: 65px;
}

.level-4 {
  padding-left: 88px;
}

.toggle {
  width: 16px;
  height: 16px;
  margin-right: 9px;
}

.node {
  display: flex;
  align-items: center;
  height: 25px;
  padding: 0 13px 0 3px;
  background: #f0f0f0;
}

.node .ico {
  width: 20px;
  height: 20px;
}

.node .comp {
  width: 22px;
  height: 22px;
  margin-left: 10px;
}

.node span {
  margin-left: 18px;
}

.node .far {
  margin-left: 17px;
}

.node.root,
.node.bold {
  font-size: 14px;
}

.node.bold {
  font-weight: bold;
}

.node.active {
  padding-right: 9px;
}

.node.active span {
  height: 25px;
  margin-left: 8px;
  padding: 0 13px;
  background: #a9cdff;
  color: #1b3a7a;
  font-weight: bold;
  line-height: 25px;
}

.node input {
  appearance: none;
  width: 17px;
  height: 17px;
  margin-left: 6px;
  border: 2px solid #444;
  border-radius: 50%;
  background: radial-gradient(#222 2px, #fff 3px);
}

/* operation dialog */
.dialog {
  width: 313px;
  margin: 30px 0 0 auto;
  background: #f0f0f0;
  border: 1px solid #c4c4c4;
}

.dialog-title {
  display: flex;
  align-items: center;
  gap: 12px;
  height: 30px;
  padding-left: 6px;
  border-bottom: 1px solid #c4c4c4;
  color: #666;
}

.dialog-tabs {
  display: flex;
  height: 35px;
  padding-top: 3px;
  background: linear-gradient(#c4c4c4, #c4c4c4) 0 100% / 100% 1px no-repeat;
}

.dialog-tabs button {
  justify-content: center;
  width: 36px;
  margin-bottom: 1px;
  border-right: 1px solid #c4c4c4;
}

.dialog-tabs .current {
  margin-bottom: 0;
  background: #f0f0f0;
  border-top: 1px solid #c4c4c4;
}

.dialog-tabs svg {
  width: 20px;
  height: 22px;
}

.dialog-body {
  padding: 9px 17px 31px 1px;
}

.dialog-body h2 {
  display: flex;
  align-items: center;
  gap: 8px;
  height: 22px;
  padding-left: 10px;
  font-family: "Open Sans", sans-serif;
  font-size: 14px;
  font-weight: bold;
  color: #444;
}

.dialog-body h2::before {
  content: "";
  border: 6px solid transparent;
  border-top: 8px solid #333;
  border-bottom: 0;
}

.row {
  position: relative;
  display: grid;
  grid-template-columns: 141px 137px;
  align-items: center;
  padding-left: 14px;
}

.row.tall {
  height: 34px;
}

.row.info {
  height: 41px;
}

.row output {
  padding-left: 4px;
}

h2 + .row {
  margin-top: 10px;
}

.select-tool {
  justify-content: center;
  width: 59px;
  height: 34px;
  background: #fff;
  border: 2px solid #dcdcdc;
}

.dropdown {
  position: relative;
}

.dropdown select {
  appearance: none;
  width: 100%;
  height: 34px;
  padding-left: 7px;
  background: #fff;
  border: 2px solid #dcdcdc;
  color: inherit;
  font: inherit;
}

.dropdown .caret {
  position: absolute;
  top: 14px;
  right: 6px;
}

.tooltip {
  position: absolute;
  top: -8px;
  left: 4px;
  padding: 0 3px;
  background: #f5f5f5;
  border: 1px solid #555;
  color: #222;
  font-family: "Open Sans", sans-serif;
  font-size: 12px;
  line-height: 15px;
}

hr {
  height: 4px;
  margin: 7px 0 11px;
  background: #bdbdbd;
  border: none;
}

.fields {
  display: flex;
  flex-direction: column;
  justify-content: space-between;
  min-height: 364px;
  margin-top: 13px;
  padding: 0 4px 0 14px;
}

.field {
  display: flex;
  align-items: center;
  justify-content: space-between;
}

.spin {
  display: flex;
  width: 126px;
  height: 26px;
  border: 1px solid #c8c8c8;
}

.spin input {
  flex: 1;
  min-width: 0;
  padding: 0 0 2px 5px;
  background: #fff;
  border: none;
  color: inherit;
  font: inherit;
}

.spin div {
  width: 17px;
  background: #e0e0e0;
}

.spin button {
  justify-content: center;
  width: 17px;
  height: 12px;
}

.spin button::before {
  content: "";
  border: 3px solid transparent;
  border-bottom: 4px solid #222;
  border-top: 0;
}

.spin button + button::before {
  border-top: 4px solid #222;
  border-bottom: 0;
}

.dialog-footer {
  display: flex;
  align-items: center;
  gap: 13px;
  height: 45px;
  padding: 0 14px 0 10px;
  border-top: 1px solid #c4c4c4;
}

.info-icon {
  width: 16px;
  height: 16px;
  margin-right: auto;
}

.dialog-footer button {
  justify-content: center;
  width: 75px;
  height: 24px;
  background: #e8e8e8;
  border: 1px solid #bdbdbd;
  color: #888;
  font-size: 15px;
}

/* quick setup flyout */
.quick-setup {
  flex-direction: column;
  width: 28px;
  height: 198px;
  margin: 150px 0 0 110px;
  background: #f0f0f0;
}

.qs-head {
  display: flex;
  align-items: center;
  justify-content: center;
  width: 100%;
  height: 23px;
  background: #ccc;
}

.qs-head svg {
  width: 12px;
  height: 8px;
}

.qs-text {
  margin-top: 2px;
  writing-mode: vertical-rl;
  font-family: "Open Sans", sans-serif;
  color: #666;
}

.qs-foot {
  width: 100%;
  height: 13px;
  margin-top: auto;
  background: #ccc;
}

/* bottom bars */
.bottom {
  position: relative;
  display: grid;
  grid-template-columns: 1fr auto 1fr;
  align-items: end;
  margin-top: auto;
  padding: 0 5px 3px;
}

.navbar {
  display: flex;
  align-items: center;
  gap: 11px;
  height: 30px;
  padding: 0 5px 0 4px;
  background: #f0f0f0;
}

.navbar svg {
  width: 20px;
  height: 20px;
}

.navbar .caret {
  margin-left: 5px;
}

.navbar .display {
  margin-left: 6px;
}

.navbar .display .caret,
.navbar .grid .caret {
  margin-left: 2px;
}

/* top edge of the taskbar shows under the window */
.taskbar-edge {
  height: 2px;
  background: linear-gradient(90deg, #333 60px, #ddd 60px, #ddd 490px, #333 490px, #333 864px, #666 864px, #666 925px, #333 925px);
}
```
